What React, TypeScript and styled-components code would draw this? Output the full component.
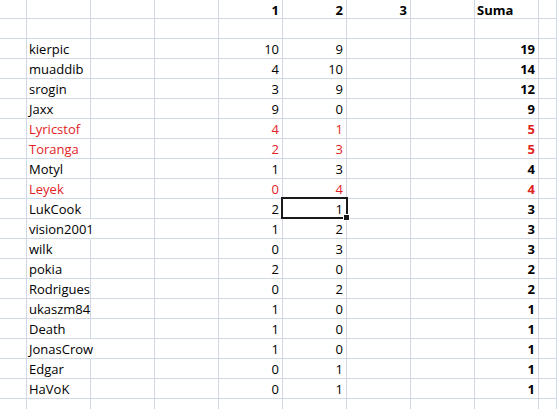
import styled, { createGlobalStyle, css } from "styled-components";

const GlobalStyle = createGlobalStyle`
  html, body {
    margin: 0;
    padding: 0;
    background: #fff;
    overflow: hidden;
  }
`;

const GRID = "#d0d7e5";

const Sheet = styled.div`
  width: 557px;
  height: 409px;
  overflow: hidden;
  display: grid;
  grid-template-columns: 27px repeat(8, 64px) 1fr;
  grid-template-rows: 19px;
  grid-auto-rows: 20px;
  font-family: "Open Sans", "Liberation Sans", sans-serif;
  font-size: 13px;
  color: #000;
`;

const Cell = styled.div<{
  $align?: "left" | "right";
  $bold?: boolean;
  $red?: boolean;
  $spill?: boolean;
  $noLine?: boolean;
  $selected?: boolean;
}>`
  box-sizing: border-box;
  position: relative;
  min-width: 0;
  border-right: 1px solid ${(p) => (p.$noLine ? "transparent" : GRID)};
  border-bottom: 1px solid ${GRID};
  padding: 0 3px 0 2px;
  line-height: 20px;
  white-space: nowrap;
  overflow: ${(p) => (p.$spill || p.$selected ? "visible" : "hidden")};
  text-align: ${(p) => p.$align ?? "left"};
  font-weight: ${(p) => (p.$bold ? 700 : 400)};
  color: ${(p) => (p.$red ? "#e2231f" : "#000")};
  z-index: ${(p) => (p.$spill || p.$selected ? 1 : 0)};

  ${(p) =>
    p.$selected &&
    css`
      &::after {
        content: "";
        position: absolute;
        top: -2px;
        left: -2px;
        right: -2px;
        bottom: -1px;
        border: 2px solid #1a1a1a;
      }
      &::before {
        content: "";
        position: absolute;
        right: -4px;
        bottom: -3px;
        width: 5px;
        height: 5px;
        background: #1a1a1a;
        border: 1px solid #fff;
        z-index: 2;
      }
    `}
`;

type Player = {
  name: string;
  r1: number;
  r2: number;
  red?: boolean;
  long?: boolean;
};

const players: Player[] = [
  { name: "kierpic", r1: 10, r2: 9 },
  { name: "muaddib", r1: 4, r2: 10 },
  { name: "srogin", r1: 3, r2: 9 },
  { name: "Jaxx", r1: 9, r2: 0 },
  { name: "Lyricstof", r1: 4, r2: 1, red: true },
  { name: "Toranga", r1: 2, r2: 3, red: true },
  { name: "Motyl", r1: 1, r2: 3 },
  { name: "Leyek", r1: 0, r2: 4, red: true },
  { name: "LukCook", r1: 2, r2: 1 },
  { name: "vision2001", r1: 1, r2: 2, long: true },
  { name: "wilk", r1: 0, r2: 3 },
  { name: "pokia", r1: 2, r2: 0 },
  { name: "Rodrigues", r1: 0, r2: 2 },
  { name: "ukaszm84", r1: 1, r2: 0 },
  { name: "Death", r1: 1, r2: 0 },
  { name: "JonasCrow", r1: 1, r2: 0, long: true },
  { name: "Edgar", r1: 0, r2: 1 },
  { name: "HaVoK", r1: 0, r2: 1 },
];

const EmptyRow = () => (
  <>
    {Array.from({ length: 10 }, (_, i) => (
      <Cell key={i} />
    ))}
  </>
);

const PlayerRow = ({ player }: { player: Player }) => {
  const { name, r1, r2, red, long } = player;
  return (
    <>
      <Cell />
      <Cell $red={red} $spill $noLine={long}>
        {name}
      </Cell>
      <Cell />
      <Cell />
      <Cell $align="right" $red={red}>
        {r1}
      </Cell>
      <Cell $align="right" $red={red} $selected={name === "LukCook"}>
        {r2}
      </Cell>
      <Cell />
      <Cell />
      <Cell $align="right" $bold $red={red}>
        {r1 + r2}
      </Cell>
      <Cell />
    </>
  );
};

export default function App() {
  return (
    <>
      <GlobalStyle />
      <Sheet>
        {/* header row */}
        <Cell />
        <Cell />
        <Cell />
        <Cell />
        <Cell $align="right" $bold>1</Cell>
        <Cell $align="right" $bold>2</Cell>
        <Cell $align="right" $bold>3</Cell>
        <Cell />
        <Cell $bold>Suma</Cell>
        <Cell />

        <EmptyRow />

        {players.map((p) => (
          <PlayerRow key={p.name} player={p} />
        ))}

        <EmptyRow />
      </Sheet>
    </>
  );
}
